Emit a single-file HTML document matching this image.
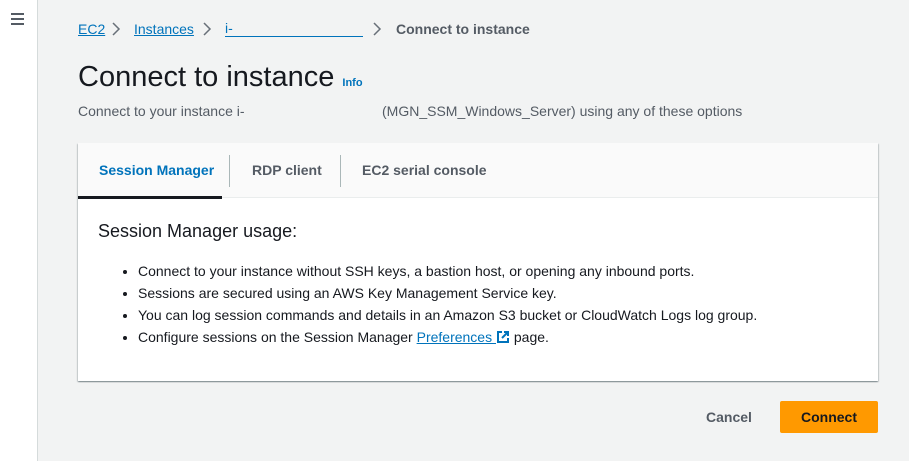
<!DOCTYPE html>
<html><head><meta charset="utf-8"><style>
*{margin:0;padding:0;box-sizing:border-box}
body{width:909px;height:461px;background:#f2f3f3;font-family:"Liberation Sans",sans-serif;color:#16191f;position:relative;overflow:hidden}
.side{position:absolute;left:0;top:0;width:38px;height:461px;background:#fff;border-right:1px solid #d5dbdb}
.ham{position:absolute;left:11px;top:13px;width:13px}
.ham i{display:block;height:2px;background:#545b64;margin-bottom:3px}
.a{position:absolute;white-space:nowrap}
.lk{color:#0073bb;text-decoration:underline}
.bc{top:21px;font-size:14px}
.card{position:absolute;left:78px;top:143px;width:800px;height:238px;background:#fff;box-shadow:0 1px 1px rgba(0,28,36,.3),1px 1px 1px rgba(0,28,36,.15),-1px 1px 1px rgba(0,28,36,.15)}
.tabs{position:absolute;left:0;top:0;width:800px;height:55px;background:#fafafa;border-bottom:1px solid #eaeded}
.tab{position:absolute;top:19px;font-size:14px;font-weight:bold;color:#545b64}
.sep{position:absolute;top:12px;width:1px;height:32px;background:#aab7b8}
ul{position:absolute;left:60px;top:117px;font-size:14px;line-height:22px}
</style></head><body>
<div class="side"><div class="ham"><i></i><i></i><i></i></div></div>
<div class="a bc lk" style="left:78px">EC2</div>
<div class="a bc lk" style="left:134px">Instances</div>
<div class="a bc" style="left:225px;width:138px;color:#0073bb;border-bottom:1px solid #0073bb;height:16px;line-height:14px">i-</div>
<div class="a bc" style="left:396px;color:#545b64;font-weight:bold">Connect to instance</div>
<svg class="a" style="left:110px;top:22px" width="12" height="14"><path d="M3 1l6 6-6 6" stroke="#687078" stroke-width="1.5" fill="none"/></svg>
<svg class="a" style="left:201px;top:22px" width="12" height="14"><path d="M3 1l6 6-6 6" stroke="#687078" stroke-width="1.5" fill="none"/></svg>
<svg class="a" style="left:371px;top:22px" width="12" height="14"><path d="M3 1l6 6-6 6" stroke="#687078" stroke-width="1.5" fill="none"/></svg>
<div class="a" style="left:78px;top:61px;font-size:29px">Connect to instance <span style="font-size:11px;font-weight:bold;color:#0073bb">Info</span></div>
<div class="a" style="left:78px;top:103px;font-size:14px;color:#545b64">Connect to your instance i-</div>
<div class="a" style="left:382px;top:103px;font-size:14px;color:#545b64">(MGN_SSM_Windows_Server) using any of these options</div>
<div class="card">
<div class="tabs">
<div class="tab" style="left:21px;color:#0073bb">Session Manager</div>
<div class="sep" style="left:151px"></div>
<div class="tab" style="left:174px">RDP client</div>
<div class="sep" style="left:262px"></div>
<div class="tab" style="left:284px">EC2 serial console</div>
<div style="position:absolute;left:0;top:53px;width:144px;height:3px;background:#16191f"></div>
</div>
<div class="a" style="left:20px;top:78px;font-size:18px">Session Manager usage:</div>
<ul>
<li>Connect to your instance without SSH keys, a bastion host, or opening any inbound ports.</li>
<li>Sessions are secured using an AWS Key Management Service key.</li>
<li>You can log session commands and details in an Amazon S3 bucket or CloudWatch Logs log group.</li>
<li>Configure sessions on the Session Manager <span class="lk">Preferences </span><svg width="14" height="14" style="vertical-align:-2px"><path d="M6 2H2v10h10V8M8 2h4v4M12 2L6 8" stroke="#0073bb" stroke-width="2" fill="none"/></svg> page.</li>
</ul>
</div>
<div class="a" style="left:706px;top:409px;font-size:14px;font-weight:bold;color:#545b64">Cancel</div>
<div class="a" style="left:780px;top:401px;width:98px;height:32px;background:#ff9900;border-radius:2px;font-size:14px;font-weight:bold;text-align:center;line-height:32px">Connect</div>
</body></html>
